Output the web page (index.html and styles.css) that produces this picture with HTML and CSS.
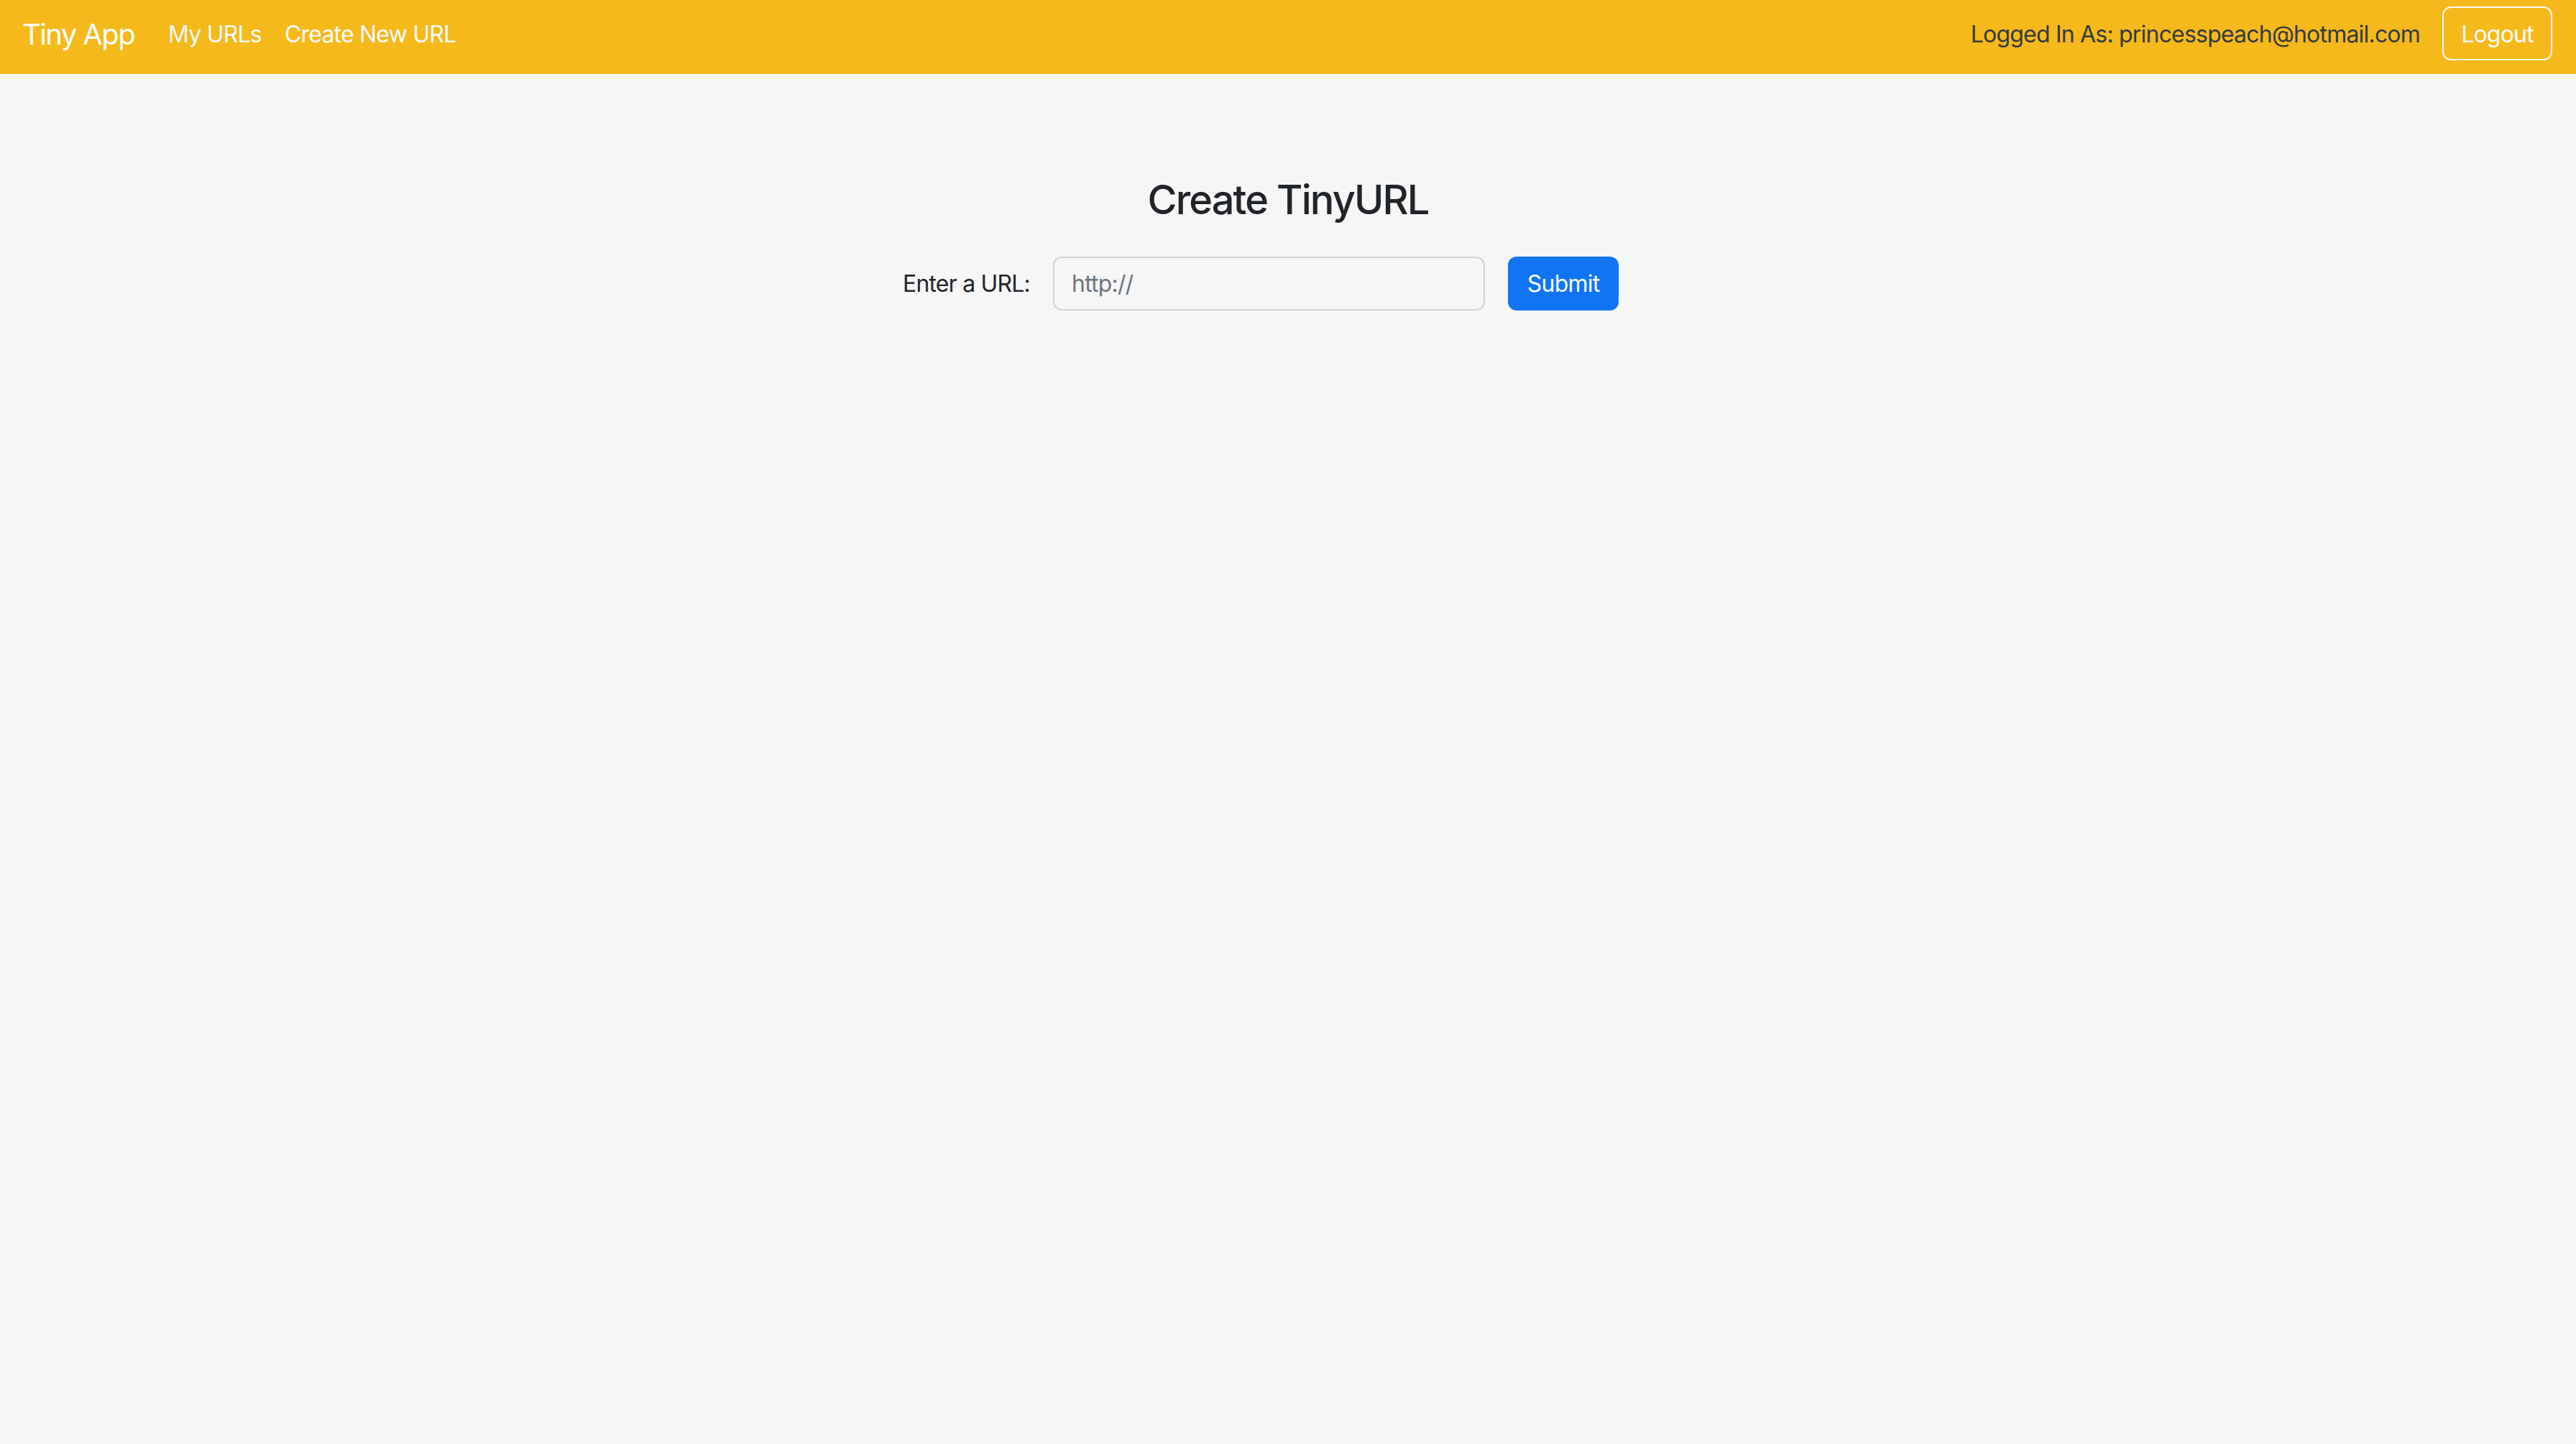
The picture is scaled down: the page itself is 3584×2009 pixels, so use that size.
FILE: index.html
```html
<!DOCTYPE html>
<html lang="en">
<head>
<meta charset="utf-8">
<title>Tiny App</title>
<link rel="stylesheet" href="styles.css">
</head>
<body>
<nav class="navbar">
  <div class="nav-left">
    <a class="brand" href="#">Tiny App</a>
    <a class="nav-link" href="#">My URLs</a>
    <a class="nav-link" href="#">Create New URL</a>
  </div>
  <div class="nav-right">
    <span class="user">Logged In As: princesspeach@hotmail.com</span>
    <button class="btn-logout" type="button">Logout</button>
  </div>
</nav>
<main class="main">
  <h3 class="title">Create TinyURL</h3>
  <form class="url-form">
    <label class="url-label" for="longURL">Enter a URL:</label>
    <input class="url-input" id="longURL" type="text" placeholder="http://">
    <button class="btn-submit" type="submit">Submit</button>
  </form>
</main>
</body>
</html>
```
FILE: styles.css
```css
* { box-sizing: border-box; }
html, body { margin: 0; padding: 0; }
body {
  background: #f6f6f6;
  font-family: Inter, "Noto Sans", "Liberation Sans", sans-serif;
  font-size: 32px;
  letter-spacing: -0.025em;
  color: #212529;
  min-height: 2009px;
}
.navbar {
  display: flex;
  align-items: center;
  justify-content: space-between;
  height: 103px;
  padding: 9px 33px 19px 31px;
  background: #f6b91c;
}
.nav-left, .nav-right {
  display: flex;
  align-items: center;
}
.nav-left { padding-top: 2px; }
.brand {
  color: #ffffff;
  text-decoration: none;
  font-size: 40px;
  letter-spacing: -0.04em;
  line-height: 1.5;
  margin-right: 31px;
}
.nav-link {
  color: #f8f9fa;
  text-decoration: none;
  font-size: 32px;
  padding: 0 16px;
}
.user {
  color: #343a40;
  font-size: 32px;
  margin-right: 31px;
  padding-top: 2px;
}
.btn-logout {
  font-family: inherit;
  font-size: 32px;
  letter-spacing: -0.025em;
  color: #f8f9fa;
  background: transparent;
  border: 2px solid #f8f9fa;
  border-radius: 12px;
  width: 153px;
  height: 75px;
  padding: 2px 0 0;
}
.main {
  display: flex;
  flex-direction: column;
  align-items: center;
}
.title {
  margin: 142px 0 45px;
  font-size: 56px;
  font-weight: 500;
  letter-spacing: -0.035em;
  line-height: 1.2;
  color: #212529;
}
.url-form {
  display: flex;
  align-items: center;
  gap: 32px;
  padding-right: 76px;
}
.url-label {
  font-size: 32px;
  color: #212529;
}
.url-input {
  width: 601px;
  height: 75px;
  border: 2px solid #ced4da;
  border-radius: 12px;
  background: #f6f6f6;
  font-family: inherit;
  font-size: 32px;
  letter-spacing: -0.025em;
  padding: 0 24px;
  color: #212529;
}
.url-input::placeholder { color: #6c757d; }
.btn-submit {
  width: 154px;
  height: 75px;
  border: 0;
  border-radius: 12px;
  background: #1174f5;
  color: #ffffff;
  font-family: inherit;
  font-size: 32px;
  letter-spacing: -0.025em;
  padding: 0;
}
```
